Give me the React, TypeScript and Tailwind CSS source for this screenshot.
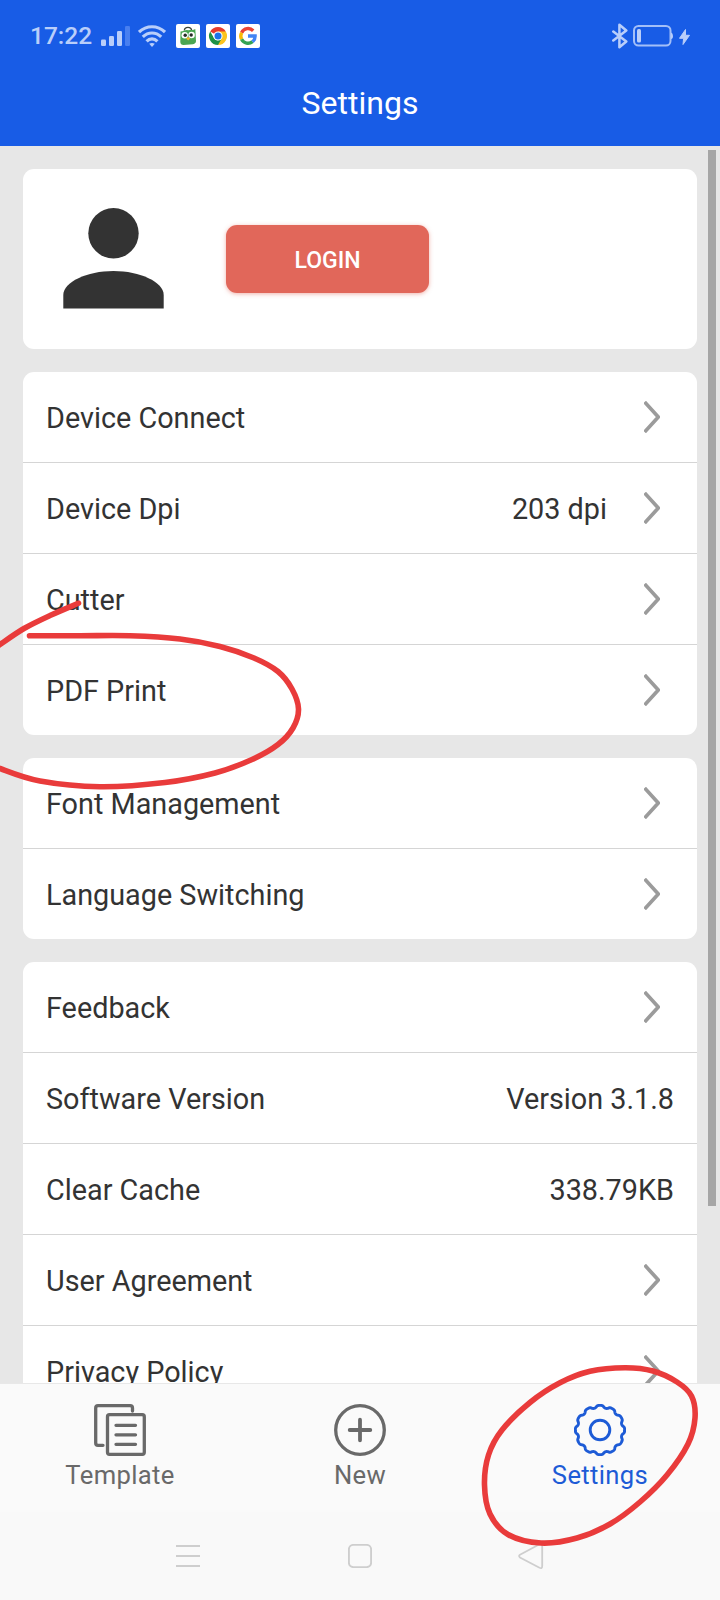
import React from "react";

function Chevron() {
  return (
    <svg className="h-8 w-4 shrink-0" viewBox="0 0 16 32" fill="none" stroke="#9b9b9b" strokeWidth="3.700">
      <path d="M0.600 1 14.300 16 0.600 31" strokeLinejoin="round" />
    </svg>
  );
}

type RowData = { label: string; value?: string; arrow?: boolean };

function Row({ label, value, arrow }: RowData) {
  return (
    <div className="flex h-[91px] items-center border-b border-[#d5d5d5] pl-[23px] text-[28.8px] leading-[34px] text-[#333] last:h-[90px] last:border-b-0">
      <span className="grow whitespace-nowrap pt-[2px]">{label}</span>
      {value && <span className={arrow ? "mr-[37px] whitespace-nowrap pt-[2px]" : "mr-[23px] whitespace-nowrap pt-[2px]"}>{value}</span>}
      {arrow && (
        <div className="mr-[37px] flex pb-[1px]">
          <Chevron />
        </div>
      )}
    </div>
  );
}

function Card({ rows }: { rows: RowData[] }) {
  return (
    <section className="shrink-0 rounded-[11px] bg-white">
      {rows.map((r) => (
        <Row key={r.label} {...r} />
      ))}
    </section>
  );
}

function StatusBar() {
  return (
    <div className="flex h-[72px] items-center pl-[30px] pr-[30px]">
      <span className="w-[71px] whitespace-nowrap pt-[1px] text-[24.5px] font-medium text-[#b9cefa]">17:22</span>
      <svg className="h-5 w-[29px]" viewBox="0 0 29 20" fill="#b9cefa">
        <rect x="0" y="13.500" width="5" height="6.500" rx="1.300" />
        <rect x="8" y="10" width="5" height="10" rx="1.300" />
        <rect x="16" y="5" width="5" height="15" rx="1.300" />
        <rect x="24" y="0" width="5" height="20" rx="1.300" fill="#487ff0" />
      </svg>
      <svg className="ml-2 h-[22px] w-7" viewBox="0 0 28 22" fill="none" stroke="#b9cefa" strokeWidth="3.200">
        <path d="M1 7C8.500 0 19.500 0 27 7" />
        <path d="M4.800 11.800C10.200 6.700 17.800 6.700 23.200 11.800" />
        <path d="M8.600 16.300C11.800 13 16.200 13 19.400 16.300" />
        <path d="M11.200 18.800Q14 17 16.800 18.800L14 22Z" fill="#b9cefa" stroke="none" />
      </svg>
      <svg className="ml-[10px] h-6 w-6 rounded-[2px] bg-white" viewBox="0 0 24 24">
        <path d="M8.300 6.500C8.700 2.300 15.300 2.300 15.600 6.500" fill="none" stroke="#3b453b" strokeWidth="1.300" />
        <path d="M4.500 7.500C8 7.500 9 5.500 12 6.200C15 5.500 17 6.500 19.300 5L20 17Q20 19.500 17 20.200L7.500 21Q4.500 20.800 4.300 18Z" fill="#4ba653" />
        <circle cx="8.700" cy="11.300" r="3.200" fill="#fff" />
        <circle cx="15.600" cy="11" r="3.200" fill="#fff" />
        <circle cx="9.200" cy="11.300" r="1.700" fill="#252b25" />
        <circle cx="15.200" cy="11" r="1.700" fill="#252b25" />
        <path d="M10 14.500 12.200 13 14.300 14.500 12.200 16.500Z" fill="#f2b42c" />
      </svg>
      <svg className="ml-[6px] h-6 w-6 rounded-[2px] bg-white" viewBox="0 0 24 24">
        <path d="M12 12 4.200 7.500A9 9 0 0 1 19.800 7.500Z" fill="#e33b2e" />
        <path d="M12 12V7.500H19.800A9 9 0 0 1 12 21Z" fill="#fcc31e" />
        <path d="M12 21A9 9 0 0 1 4.200 7.500L8.100 14.200 12 16.500 15.900 14.200Z" fill="#1e9245" />
        <circle cx="12" cy="12" r="4.600" fill="#fff" />
        <circle cx="12" cy="12" r="3.500" fill="#1a73e8" />
      </svg>
      <svg className="ml-[6px] h-6 w-6 rounded-[2px] bg-white" viewBox="0 0 24 24" fill="none" strokeWidth="3.400">
        <path d="M17.200 6.700A7.200 7.200 0 0 0 5.600 8.700" stroke="#e94335" />
        <path d="M5.600 8.700A7.200 7.200 0 0 0 5.600 15.300" stroke="#fabb05" />
        <path d="M5.600 15.300A7.200 7.200 0 0 0 16.500 17.700" stroke="#34a353" />
        <path d="M12 12H19.100A7.200 7.200 0 0 1 16.500 17.700" stroke="#4285f4" />
      </svg>
      <div className="grow" />
      <svg className="h-[26px] w-4" viewBox="0 0 16 26" fill="none" stroke="#b9cefa" strokeWidth="2.500" strokeLinejoin="round" strokeLinecap="round">
        <path d="M1.300 8.500 14.300 18.500 7.400 24.300V1.700L14.300 7.500 1.300 17.500" />
      </svg>
      <svg className="ml-[5px] h-[22px] w-10" viewBox="0 0 40 22" fill="none">
        <rect x="1" y="1" width="36.500" height="19.500" rx="4.500" stroke="#a3bff8" strokeWidth="2" />
        <rect x="4" y="4" width="4" height="13.500" rx="1.500" fill="#b9cefa" />
        <path d="M38 7.500Q40 8 40 11T38 14Z" fill="#b9cefa" />
      </svg>
      <svg className="ml-[6px] mt-[1px] h-4 w-[11px]" viewBox="0 0 11 16" fill="#b9cefa" stroke="#b9cefa" strokeWidth="1" strokeLinejoin="round">
        <path d="M6.500 0.500 0.500 9.300H4.600L4 15.500 10.500 6.300H6.500Z" />
      </svg>
    </div>
  );
}

const gear = (() => {
  const pts: string[] = [];
  for (let i = 0; i <= 360; i++) {
    const a = (i / 360) * Math.PI * 2;
    const r = 23.4 + 1.3 * Math.tanh(1.5 * (Math.cos(a * 12) + 0.35));
    pts.push(`${(26 + r * Math.sin(a)).toFixed(2)} ${(26 - r * Math.cos(a)).toFixed(2)}`);
  }
  return "M" + pts.join("L") + "Z";
})();

type Point = [number, number];

/* Smooth curve running through every point (Catmull-Rom to Bézier). */
function smooth(pts: Point[], closed: boolean) {
  const n = pts.length;
  const at = (i: number) => (closed ? pts[(i + n) % n] : pts[Math.max(0, Math.min(n - 1, i))]);
  let d = `M${pts[0][0]} ${pts[0][1]}`;
  for (let i = 0; i < (closed ? n : n - 1); i++) {
    const [a, b, c, e] = [at(i - 1), at(i), at(i + 1), at(i + 2)];
    d += `C${b[0] + (c[0] - a[0]) / 6} ${b[1] + (c[1] - a[1]) / 6} ${c[0] - (e[0] - b[0]) / 6} ${c[1] - (e[1] - b[1]) / 6} ${c[0]} ${c[1]}`;
  }
  return d;
}

const pdfMark = smooth(
  [
    [29.5, 635.7], [80, 635.7], [130, 635.7], [180, 639], [220, 646.5], [254, 658], [278, 671.5],
    [292, 689], [298.5, 709], [293, 728], [278, 744.5], [252, 759.5], [215, 773], [165, 782.5], [100, 786.7],
    [40, 781], [0, 768.5], [-12, 762],
  ],
  false,
);
const pdfTail = smooth([[78.5, 603.2], [50, 615.5], [24, 628.5], [0, 644.5], [-10, 652]], false);
const settingsMark = smooth(
  [
    [625, 1367.7], [653, 1371], [677, 1382], [691.5, 1396], [695, 1418], [688, 1444], [667, 1475], [640, 1502],
    [610, 1524], [577, 1538], [541, 1543], [508, 1534.5], [490, 1514], [484.5, 1485], [488.5, 1455], [502, 1430],
    [530, 1402.5], [560, 1382.8], [590, 1371.3],
  ],
  true,
);

function Tab({ label, active, children }: { label: string; active?: boolean; children: React.ReactNode }) {
  return (
    <div className={active ? "flex w-60 flex-col items-center pt-5 text-[#1d5bd6]" : "flex w-60 flex-col items-center pt-5 text-[#696969]"}>
      <svg className="h-[52px] w-[52px]" viewBox="0 0 52 52" fill="none" stroke="currentColor" strokeWidth="3.300" strokeLinecap="round" strokeLinejoin="round">
        {children}
      </svg>
      <span className="mt-1 text-[25.6px] leading-[30px] tracking-[0.35px]">{label}</span>
    </div>
  );
}

export default function App() {
  return (
    <div className="relative flex h-[1600px] w-[720px] flex-col overflow-hidden bg-[#e7e7e7] font-['Roboto',sans-serif]">
      <header className="h-[146px] shrink-0 bg-[#185ce6]">
        <StatusBar />
        <h1 className="pt-[11px] text-center text-[32px] leading-[40px] text-white">Settings</h1>
      </header>

      <main className="flex h-[1237px] shrink-0 overflow-hidden pl-[23px]">
        <div className="flex w-[674px] flex-col gap-[23px] pt-[23px]">
          <section className="flex h-[180px] shrink-0 items-center rounded-[11px] bg-white pl-10">
            <svg className="mb-[1px] h-[101px] w-[101px]" viewBox="0 0 101 101" fill="#333">
              <circle cx="50.500" cy="25.300" r="25.200" />
              <path d="M0.300 100.500V87C0.300 74 24 63 50.500 63S100.700 74 100.700 87V100.500Z" />
            </svg>
            <button className="ml-[62px] h-[68px] w-[203px] rounded-[11px] bg-[#e1675a] pt-[4px] text-[23px] font-medium text-white shadow-[0_1px_4px_rgba(225,103,90,0.5)]">
              LOGIN
            </button>
          </section>
          <Card
            rows={[
              { label: "Device Connect", arrow: true },
              { label: "Device Dpi", value: "203 dpi", arrow: true },
              { label: "Cutter", arrow: true },
              { label: "PDF Print", arrow: true },
            ]}
          />
          <Card
            rows={[
              { label: "Font Management", arrow: true },
              { label: "Language Switching", arrow: true },
            ]}
          />
          <Card
            rows={[
              { label: "Feedback", arrow: true },
              { label: "Software Version", value: "Version 3.1.8" },
              { label: "Clear Cache", value: "338.79KB" },
              { label: "User Agreement", arrow: true },
              { label: "Privacy Policy", arrow: true },
            ]}
          />
        </div>
        <div className="ml-[11px] mt-1 h-[1056px] w-2 bg-[#a6a6a6]" />
      </main>

      <nav className="flex h-[129px] shrink-0 border-t border-[#e8e8e8] bg-[#fafafa]">
        <Tab label="Template">
          <path d="M38.500 7V4Q38.500 1.700 36.200 1.700H4Q1.700 1.700 1.700 4V39Q1.700 41.300 4 41.300H9" />
          <rect x="13.500" y="10.700" width="36.800" height="39.600" rx="2" />
          <path d="M22 21.300H41.500M22 30.800H41.500M22 40.300H41.500" />
        </Tab>
        <Tab label="New">
          <circle cx="26" cy="26" r="24.300" />
          <path d="M15.700 26H36.300M26 15.700V36.300" strokeWidth="3.800" />
        </Tab>
        <Tab label="Settings" active>
          <path d={gear} strokeWidth="2.900" />
          <circle cx="26" cy="26" r="9.800" strokeWidth="2.900" />
        </Tab>
      </nav>
      <footer className="flex h-[88px] shrink-0 items-center justify-between bg-[#f9f9f9] pl-[176px] pr-[177px]">
        <svg className="h-6 w-6" viewBox="0 0 24 24" stroke="#cecece" strokeWidth="1.900">
          <path d="M0 2H24M0 12H24M0 22H24" />
        </svg>
        <svg className="h-6 w-6" viewBox="0 0 24 24" fill="none" stroke="#cecece" strokeWidth="1.900">
          <rect x="0.900" y="0.900" width="22.200" height="22.200" rx="4.500" />
        </svg>
        <svg className="h-6 w-6 overflow-visible" viewBox="0 0 24 24" fill="none" stroke="#cecece" strokeWidth="1.800">
          <path d="M20.500 0.300Q23.200 -0.700 23.200 2V22Q23.200 25 20.500 23.700L1 13.500Q-0.800 12 1 10.700Z" />
        </svg>
      </footer>

      <svg className="pointer-events-none absolute inset-0 h-[1600px] w-[720px]" viewBox="0 0 720 1600" fill="none" stroke="#e93b3b" strokeWidth="5.600" strokeLinecap="round" strokeLinejoin="round">
        <path d={pdfMark} />
        <path d={pdfTail} />
        <path d={settingsMark} />
      </svg>
    </div>
  );
}
